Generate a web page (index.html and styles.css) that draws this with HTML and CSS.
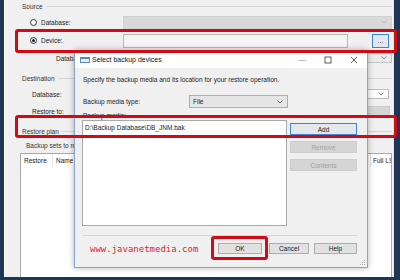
FILE: index.html
```html
<!DOCTYPE html>
<html lang="en">
<head>
    <meta charset="UTF-8">
    <meta name="viewport" content="width=device-width, initial-scale=1.0">
    <title>Restore Database - Select backup devices</title>
    <link rel="stylesheet" href="styles.css">
</head>
<body>
    <div id="restore-window">
        <!-- Source -->
        <div class="section"><span>Source</span><div class="rule"></div></div>
        <div class="row row-src">
            <label class="radio"><span class="dot"></span>Database:</label>
            <div class="combo combo-disabled">
                <svg width="6" height="4" viewBox="0 0 6 4"><path d="M0.5 0.5 L3 3 L5.5 0.5" fill="none" stroke="#a8a8a8" stroke-width="0.8"/></svg>
            </div>
        </div>
        <div class="row row-device">
            <label class="radio"><span class="dot checked"></span>Device:</label>
            <div class="textbox device-box"></div>
            <button class="btn btn-focus browse">...</button>
        </div>
        <div class="row row-bset">
            <span>Database:</span>
            <div class="combo combo-light">
                <svg width="6" height="4" viewBox="0 0 6 4"><path d="M0.5 0.5 L3 3 L5.5 0.5" fill="none" stroke="#777" stroke-width="0.8"/></svg>
            </div>
        </div>

        <!-- Destination -->
        <div class="section sec-dest"><span>Destination</span><div class="rule"></div></div>
        <div class="row row-dest">
            <span>Database:</span>
            <div class="combo combo-white">
                <svg width="6" height="4" viewBox="0 0 6 4"><path d="M0.5 0.5 L3 3 L5.5 0.5" fill="none" stroke="#666" stroke-width="0.8"/></svg>
            </div>
        </div>
        <div class="row row-restore-to">
            <span>Restore to:</span>
            <button class="btn timeline" disabled>Timeline...</button>
        </div>

        <!-- Restore plan -->
        <div class="section sec-plan"><span>Restore plan</span><div class="rule"></div></div>
        <div class="sets-label">Backup sets to restore:</div>
        <div class="grid">
            <div class="grid-head">
                <span class="col col-restore">Restore</span>
                <span class="col col-name">Name</span>
                <span class="col col-full">Full LSN</span>
            </div>
        </div>
    </div>

    <!-- Dialog: Select backup devices -->
    <div id="dialog">
        <div class="titlebar">
            <svg class="title-icon" width="10" height="6" viewBox="0 0 10 6">
                <rect x="0.5" y="0.5" width="9" height="5" fill="#e4edf8" stroke="#5b87c4"/>
                <rect x="0.5" y="0.5" width="9" height="1.5" fill="#5b87c4"/>
            </svg>
            <span>Select backup devices</span>
            <div class="controls">
                <span class="ctl"><svg width="8" height="8" viewBox="0 0 8 8"><path d="M0 4.5 H8" stroke="#b0b0b0" stroke-width="0.8"/></svg></span>
                <span class="ctl"><svg width="8" height="8" viewBox="0 0 8 8"><rect x="1" y="1" width="6" height="6" fill="none" stroke="#333" stroke-width="0.8"/></svg></span>
                <span class="ctl"><svg width="8" height="8" viewBox="0 0 8 8"><path d="M1 1 L7 7 M7 1 L1 7" stroke="#333" stroke-width="0.8"/></svg></span>
            </div>
        </div>
        <div class="dlg-body">
            <div class="intro">Specify the backup media and its location for your restore operation.</div>
            <div class="media-type">
                <span class="media-type-label">Backup media type:</span>
                <div class="combo combo-file">
                    <span>File</span>
                    <svg width="6" height="4" viewBox="0 0 6 4"><path d="M0.5 0.5 L3 3 L5.5 0.5" fill="none" stroke="#555" stroke-width="0.8"/></svg>
                </div>
            </div>
            <div class="media-label">Backup media:</div>
            <div class="media-area">
                <div class="listbox">
                    <div class="item">D:\Backup Database\DB_JNM.bak</div>
                </div>
                <div class="btn-col">
                    <button class="btn btn-focus">Add</button>
                    <button class="btn" disabled>Remove</button>
                    <button class="btn" disabled>Contents</button>
                </div>
            </div>
            <div class="sep"></div>
            <div class="foot">
                <span class="site">www.javanetmedia.com</span>
                <button class="btn ok">OK</button>
                <button class="btn cancel">Cancel</button>
                <button class="btn help">Help</button>
            </div>
        </div>
        <svg class="grip" width="5" height="5" viewBox="0 0 5 5">
            <rect x="4" y="0" width="1" height="1" fill="#b5b5b5"/>
            <rect x="2" y="2" width="1" height="1" fill="#b5b5b5"/>
            <rect x="4" y="2" width="1" height="1" fill="#b5b5b5"/>
            <rect x="0" y="4" width="1" height="1" fill="#b5b5b5"/>
            <rect x="2" y="4" width="1" height="1" fill="#b5b5b5"/>
            <rect x="4" y="4" width="1" height="1" fill="#b5b5b5"/>
        </svg>
    </div>

    <!-- red highlight marks -->
    <div class="mark mark-device"></div>
    <div class="mark mark-media"></div>
    <div class="mark mark-ok"></div>
</body>
</html>
```

FILE: styles.css
```css
* {
    box-sizing: border-box;
}

body {
    margin: 0;
    width: 400px;
    height: 280px;
    position: relative;
    overflow: hidden;
    background-color: #1f3657;
    font-family: "Liberation Sans", Arial, sans-serif;
    font-size: 6.5px;
    color: #222;
}

button {
    font-family: inherit;
    font-size: inherit;
    padding: 0;
}

#restore-window {
    margin-left: 4px;
    width: 390px;
    height: 277px;
    background: #f0f0f0;
    border-left: 1px solid #fbfbfb;
    border-right: 1px solid #e6e6e6;
    display: flex;
    flex-direction: column;
}

.section {
    display: flex;
    align-items: center;
    height: 12px;
    padding-left: 17px;
    padding-right: 1px;
    color: #333;
}

.section .rule {
    flex: 1;
    height: 1px;
    margin-left: 3px;
    background: #d4d4d4;
}

.sec-dest,
.sec-plan {
    margin-top: 8px;
}

.row {
    display: flex;
    align-items: center;
    padding-right: 1px;
}

.row-src {
    height: 14px;
    margin-top: 3px;
    padding-left: 25px;
}

.row-device {
    height: 15px;
    margin-top: 4px;
    padding-left: 25px;
}

.row-bset {
    height: 12px;
    margin-top: 4px;
    padding-left: 51px;
}

.row-dest {
    height: 12px;
    margin-top: 4px;
    padding-left: 27px;
}

.row-restore-to {
    height: 12px;
    margin-top: 5px;
    padding-left: 27px;
}

.radio {
    display: flex;
    align-items: center;
}

.dot {
    width: 7px;
    height: 7px;
    margin-right: 4px;
    border: 1px solid #333;
    border-radius: 50%;
    background: #fff;
    display: flex;
    align-items: center;
    justify-content: center;
}

.dot.checked::after {
    content: "";
    width: 3px;
    height: 3px;
    border-radius: 50%;
    background: #1a1a1a;
}

.combo {
    display: flex;
    align-items: center;
    justify-content: flex-end;
    padding-right: 4px;
    border: 1px solid #c8c8c8;
}

.combo-disabled {
    margin-left: auto;
    width: 269px;
    height: 13px;
    background: #d9d9d9;
    border-color: #d2d2d2;
}

.combo-light {
    margin-left: auto;
    width: 60px;
    height: 10px;
    background: #ececec;
    border-color: #c4c4c4;
}

.combo-white {
    margin-left: auto;
    margin-right: 3px;
    width: 266px;
    height: 10px;
    background: #fcfcfc;
    border-color: #bdbdbd;
}

.textbox {
    background: #f5f5f5;
    border: 1px solid #b8b8b8;
}

.device-box {
    margin-left: auto;
    width: 225px;
    height: 14px;
}

.btn {
    height: 12px;
    background: #e1e1e1;
    border: 1px solid #adadad;
    color: #1a1a1a;
}

.btn:disabled {
    background: #d5d5d5;
    border-color: #cdcdcd;
    color: #a2a2a2;
}

.btn-focus {
    background: #e3e8ee;
    border-color: #3a86d8;
}

.browse {
    margin-left: 24px;
    margin-right: 3px;
    width: 17px;
    height: 14px;
    line-height: 10px;
}

.timeline {
    margin-left: auto;
    margin-right: 2px;
    width: 68px;
    height: 11px;
}

.sets-label {
    height: 12px;
    line-height: 12px;
    margin-top: 3px;
    padding-left: 21px;
    color: #333;
}

.grid {
    flex: 1;
    margin-top: 1px;
    margin-left: 15px;
    margin-right: 1px;
    background: #fff;
    border: 1px solid #a8a8a8;
    border-bottom: none;
}

.grid-head {
    display: flex;
    height: 13px;
    align-items: center;
}

.col {
    height: 100%;
    line-height: 13px;
    padding-left: 3px;
    white-space: nowrap;
    overflow: hidden;
}

.col-restore {
    width: 32px;
    border-right: 1px solid #e2e2e2;
}

.col-full {
    margin-left: auto;
    width: 21px;
    padding-left: 2px;
    border-left: 1px solid #e2e2e2;
}

/* dialog */
#dialog {
    position: absolute;
    left: 74px;
    top: 50px;
    width: 294px;
    height: 218px;
    background: #f0f0f0;
    border: 1px solid #86a6d2;
    box-shadow: 0 0 6px rgba(0, 0, 0, 0.3);
    display: flex;
    flex-direction: column;
}

.titlebar {
    height: 17px;
    background: #fff;
    display: flex;
    align-items: center;
    padding-left: 5px;
    font-size: 7px;
    color: #111;
}

.title-icon {
    margin-right: 2px;
}

.controls {
    margin-left: auto;
    display: flex;
}

.ctl {
    width: 26px;
    display: flex;
    justify-content: center;
}

.dlg-body {
    flex: 1;
    display: flex;
    flex-direction: column;
    padding: 0 10px 0 8px;
}

.intro {
    margin-top: 7px;
    height: 10px;
    line-height: 10px;
}

.media-type {
    display: flex;
    align-items: center;
    height: 13px;
    margin-top: 10px;
}

.media-type-label {
    width: 106px;
}

.combo-file {
    width: 99px;
    height: 13px;
    justify-content: space-between;
    padding-left: 3px;
    background: #e5e5e5;
    border-color: #adadad;
}

.media-label {
    margin-top: 4px;
    height: 8px;
    line-height: 8px;
}

.media-area {
    display: flex;
    height: 106px;
    margin-left: -1px;
}

.listbox {
    width: 205px;
    background: #fff;
    border: 1px solid #a9a9a9;
}

.item {
    padding: 3px 2px;
    line-height: 8px;
}

.btn-col {
    margin-left: 3px;
    width: 67px;
    padding-top: 3px;
    display: flex;
    flex-direction: column;
    gap: 6px;
}

.sep {
    margin-top: 9px;
    height: 1px;
    background: #d6d6d6;
}

.foot {
    display: flex;
    align-items: center;
    height: 11px;
    margin-top: 7px;
}

.site {
    margin-left: 7px;
    font-family: "DejaVu Sans Mono", monospace;
    font-size: 9px;
    color: #e2231a;
}

.foot .btn {
    height: 11px;
}

.ok {
    margin-left: auto;
    width: 44px;
}

.cancel {
    margin-left: 7px;
    width: 40px;
}

.help {
    margin-left: 5px;
    width: 43px;
}

.grip {
    position: absolute;
    right: 2px;
    bottom: 2px;
}

/* red highlight marks */
.mark {
    position: absolute;
    border: 3px solid #d20a14;
    border-radius: 3px;
}

.mark-device {
    left: 15px;
    top: 29px;
    width: 382px;
    height: 24px;
}

.mark-media {
    left: 15px;
    top: 115px;
    width: 382px;
    height: 23px;
}

.mark-ok {
    left: 211px;
    top: 236px;
    width: 57px;
    height: 24px;
}
```
